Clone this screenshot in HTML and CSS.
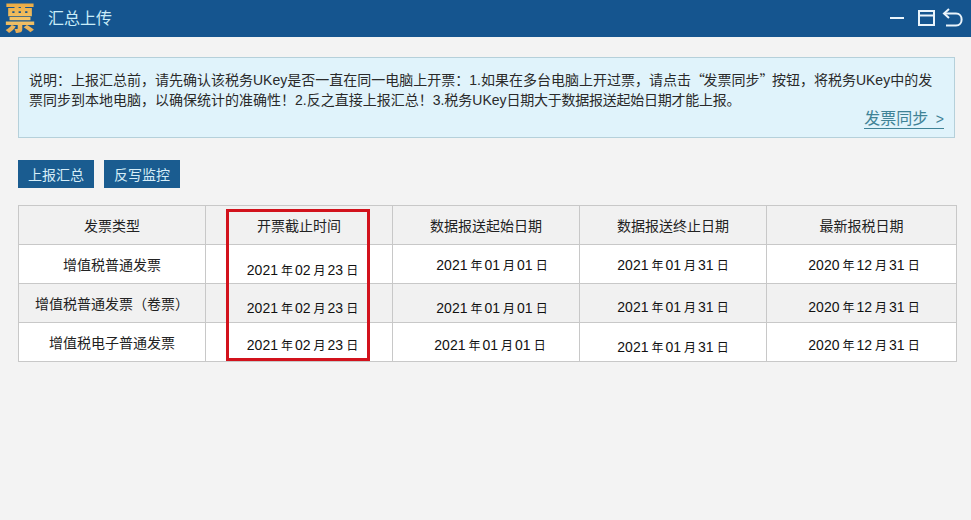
FILE: index.html
```html
<!DOCTYPE html>
<html lang="zh-CN">
<head>
<meta charset="utf-8">
<title>汇总上传</title>
<link rel="stylesheet" href="styles.css">
</head>
<body>
<header class="titlebar">
  <div class="logo">票</div>
  <div class="title">汇总上传</div>
  <div class="win-controls">
    <svg class="win-icon" width="80" height="25" viewBox="0 0 80 25" fill="none" stroke="#eaf4fb" stroke-width="2">
      <path d="M2 12H16"/>
      <rect x="31" y="5" width="15" height="14"/>
      <path d="M31 9.500H46"/>
      <path d="M56 7.500H68C75.500 7.500 75.500 19.500 68 19.500H58"/>
      <path d="M61 3L56 7.500L61 12"/>
    </svg>
  </div>
</header>
<main class="content">
  <section class="notice">
    <p class="notice-text">
      <span class="line">说明：上报汇总前，请先确认该税务UKey是否一直在同一电脑上开票：1.如果在多台电脑上开过票，请点击<span class="cjk">“</span>发票同步<span class="cjk">”</span>按钮，将税务UKey中的发</span>
      <span class="line">票同步到本地电脑，以确保统计的准确性！2.反之直接上报汇总！3.税务UKey<span class="tight">日期大于数据报送起始日期才能上报。</span></span>
    </p>
    <div class="notice-link-row"><a class="notice-link">发票同步 <span class="chev">&gt;</span></a></div>
  </section>
  <div class="actions">
    <button class="btn">上报汇总</button>
    <button class="btn">反写监控</button>
  </div>
  <div class="table-wrap">
    <table class="grid">
      <colgroup><col class="c1"><col class="c2"><col class="c3"><col class="c4"><col class="c5"></colgroup>
      <thead>
        <tr><th>发票类型</th><th>开票截止时间</th><th>数据报送起始日期</th><th>数据报送终止日期</th><th>最新报税日期</th></tr>
      </thead>
      <tbody>
        <tr>
          <td>增值税普通发票</td>
          <td class="col2 down5"><span class="date">2021<i>年</i>02<i>月</i>23<i>日</i></span></td>
          <td class="col3a"><span class="date">2021<i>年</i>01<i>月</i>01<i>日</i></span></td>
          <td><span class="date">2021<i>年</i>01<i>月</i>31<i>日</i></span></td>
          <td class="col5"><span class="date">2020<i>年</i>12<i>月</i>31<i>日</i></span></td>
        </tr>
        <tr class="alt">
          <td>增值税普通发票（卷票）</td>
          <td class="col2 down4"><span class="date">2021<i>年</i>02<i>月</i>23<i>日</i></span></td>
          <td class="col3a down4"><span class="date">2021<i>年</i>01<i>月</i>01<i>日</i></span></td>
          <td class="down3"><span class="date">2021<i>年</i>01<i>月</i>31<i>日</i></span></td>
          <td class="col5 down3"><span class="date">2020<i>年</i>12<i>月</i>31<i>日</i></span></td>
        </tr>
        <tr>
          <td>增值税电子普通发票</td>
          <td class="col2 down2"><span class="date">2021<i>年</i>02<i>月</i>23<i>日</i></span></td>
          <td class="col3b down2"><span class="date">2021<i>年</i>01<i>月</i>01<i>日</i></span></td>
          <td class="down4"><span class="date">2021<i>年</i>01<i>月</i>31<i>日</i></span></td>
          <td class="col5 down2"><span class="date">2020<i>年</i>12<i>月</i>31<i>日</i></span></td>
        </tr>
      </tbody>
    </table>
    <div class="highlight"></div>
  </div>
</main>
</body>
</html>
```
FILE: styles.css
```css
* { box-sizing: border-box; }
html, body { margin: 0; padding: 0; }
body {
  width: 971px;
  height: 520px;
  overflow: hidden;
  background: #f3f3f3;
  color: #222;
  font-family: "Liberation Sans", "Noto Sans CJK SC", sans-serif;
  font-size: 14px;
}
.titlebar {
  height: 37px;
  background: #15558f;
  display: flex;
  align-items: center;
}
.logo {
  width: 32px;
  margin-left: 4px;
  font-family: "Liberation Sans", "Noto Sans CJK SC", sans-serif;
  font-size: 31px;
  font-weight: 900;
  line-height: 37px;
  text-align: center;
  background: linear-gradient(180deg, #e9a63c 0%, #f2c46a 55%, #e3a14a 100%);
  -webkit-background-clip: text;
  background-clip: text;
  color: transparent;
}
.title {
  margin-left: 12px;
  padding-bottom: 3px;
  color: #c9ecf8;
  font-size: 16px;
}
.win-controls {
  margin-left: auto;
  display: flex;
  align-items: center;
}
.win-icon { display: block; margin-right: 3px; }
.content { padding: 20px 16px 0 18px; }
.notice {
  height: 81px;
  border: 1px solid #b5d0da;
  background: #e0f3fb;
  padding: 11px 10px 0 10px;
}
.notice-text {
  margin: 0;
  font-size: 14px;
  line-height: 20px;
  color: #2a2a2a;
}
.line { display: block; white-space: nowrap; }
.cjk { font-family: "Noto Sans CJK SC", sans-serif; letter-spacing: -1.5px; }
.tight { letter-spacing: -0.25px; }
.notice-link-row {
  display: flex;
  justify-content: flex-end;
}
.notice-link {
  font-size: 16px;
  line-height: 18px;
  color: #3f8296;
  border-bottom: 1px solid #3f8296;
  white-space: nowrap;
}
.chev { font-size: 14px; margin-left: 3px; }
.actions {
  display: flex;
  gap: 10px;
  margin-top: 22px;
}
.btn {
  width: 76px;
  height: 28px;
  padding: 0;
  border: 0;
  background: #1a5c90;
  color: #d6eef8;
  font-family: inherit;
  font-size: 14px;
}
.table-wrap { position: relative; margin-top: 17px; width: 938px; }
.grid {
  width: 938px;
  table-layout: fixed;
  border-collapse: collapse;
  background: #fff;
}
.c1, .c2, .c3, .c4 { width: 187px; }
.c5 { width: 190px; }
.grid th, .grid td {
  height: 39px;
  border: 1px solid #c8c8c8;
  padding: 0;
  text-align: center;
  font-size: 14px;
  font-weight: 400;
  color: #222;
}
.grid thead tr, .grid tr.alt { background: #f1f1f1; }
.grid td.col2 { padding-left: 7px; }
.grid td.col3a { padding-left: 12px; }
.grid td.col3b { padding-left: 8px; }
.grid td.col5 { padding-left: 5px; }
.grid td.down2 { padding-top: 4px; }
.grid td.down3 { padding-top: 6px; }
.grid td.down4 { padding-top: 8px; }
.grid td.down5 { padding-top: 11px; }
.date {
  font-size: 14px;
  color: #111;
  white-space: nowrap;
}
.date i {
  font-style: normal;
  font-size: 12px;
  margin: 0 2px 0 3px;
}
.date i:last-child { margin-right: 0; }
.highlight {
  position: absolute;
  left: 208px;
  top: 4px;
  width: 144px;
  height: 152px;
  border: 3px solid #d2121c;
  pointer-events: none;
}
```
